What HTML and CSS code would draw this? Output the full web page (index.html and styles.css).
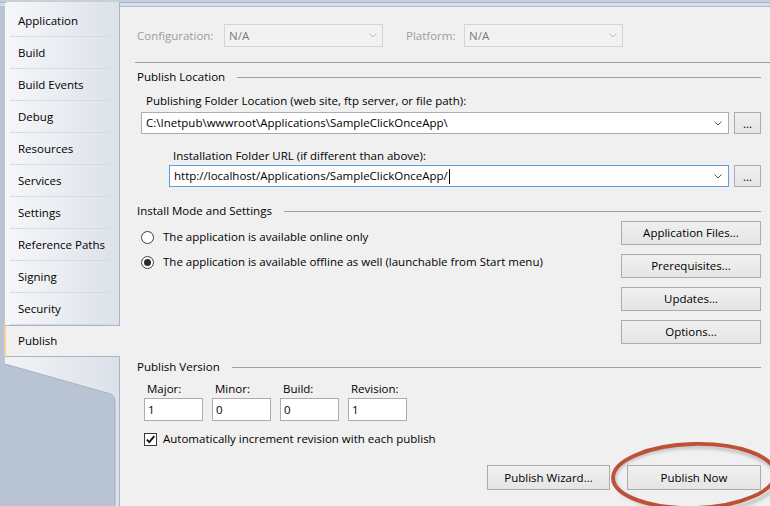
FILE: index.html
```html
<!DOCTYPE html>
<html>
<head>
<meta charset="utf-8">
<link rel="stylesheet" href="styles.css">
</head>
<body>
<div class="frame">
  <nav class="sidebar">
    <div class="tabs">
      <div class="tab">Application</div>
      <div class="tab">Build</div>
      <div class="tab">Build Events</div>
      <div class="tab">Debug</div>
      <div class="tab">Resources</div>
      <div class="tab">Services</div>
      <div class="tab">Settings</div>
      <div class="tab">Reference Paths</div>
      <div class="tab">Signing</div>
      <div class="tab">Security</div>
      <div class="tab selected">Publish</div>
    </div>
    <div class="sidebar-rest">
      <svg class="rest-shape" width="114" height="149" viewBox="0 0 114 149">
        <defs>
          <linearGradient id="sg" x1="0" x2="1" y1="0" y2="0">
            <stop offset="0" stop-color="#f1f3f6"/>
            <stop offset="1" stop-color="#dce1e9"/>
          </linearGradient>
        </defs>
        <path d="M0 0 H114 V149 H110 V44 Q110 38 104 36.5 L0 7 Z" fill="url(#sg)" stroke="none"/>
        <path d="M0 7 L104 36.5 Q110 38 110 44 V149" fill="none" stroke="#a7b3c4" stroke-width="1"/>
      </svg>
    </div>
  </nav>

  <main class="panel">
    <div class="config-row">
      <span class="dis-label cfg">Configuration:</span>
      <div class="select">
        <span>N/A</span>
        <svg class="chev" width="8" height="5" viewBox="0 0 8 5"><path d="M0.5 0.5 L4 4 L7.5 0.5" fill="none" stroke="#b8b8b8" stroke-width="1"/></svg>
      </div>
      <span class="dis-label plat">Platform:</span>
      <div class="select">
        <span>N/A</span>
        <svg class="chev" width="8" height="5" viewBox="0 0 8 5"><path d="M0.5 0.5 L4 4 L7.5 0.5" fill="none" stroke="#b8b8b8" stroke-width="1"/></svg>
      </div>
    </div>

    <div class="rule"></div>

    <div class="group-head"><span>Publish Location</span><i class="line"></i></div>

    <div class="field-label pub">Publishing Folder Location (web site, ftp server, or file path):</div>
    <div class="combo-row r1">
      <div class="combo">
        <span class="ctext">C:\Inetpub\wwwroot\Applications\SampleClickOnceApp\</span>
        <svg class="chev" width="8" height="5" viewBox="0 0 8 5"><path d="M0.5 0.5 L4 4 L7.5 0.5" fill="none" stroke="#555" stroke-width="1"/></svg>
      </div>
      <button class="btn dots">...</button>
    </div>

    <div class="field-label inst">Installation Folder URL (if different than above):</div>
    <div class="combo-row r2">
      <div class="combo focus">
        <span class="ctext">http://localhost/Applications/SampleClickOnceApp/<span class="caret"></span></span>
        <svg class="chev" width="8" height="5" viewBox="0 0 8 5"><path d="M0.5 0.5 L4 4 L7.5 0.5" fill="none" stroke="#555" stroke-width="1"/></svg>
      </div>
      <button class="btn dots">...</button>
    </div>

    <div class="group-head g2"><span>Install Mode and Settings</span><i class="line"></i></div>

    <div class="install">
      <div class="radios">
        <div class="radio-row"><span class="radio"></span><span>The application is available online only</span></div>
        <div class="radio-row"><span class="radio"><span class="dot"></span></span><span>The application is available offline as well (launchable from Start menu)</span></div>
      </div>
      <div class="side-buttons">
        <button class="btn side">Application Files...</button>
        <button class="btn side">Prerequisites...</button>
        <button class="btn side">Updates...</button>
        <button class="btn side">Options...</button>
      </div>
    </div>

    <div class="group-head g3"><span>Publish Version</span><i class="line"></i></div>

    <div class="version">
      <div class="vfield"><span class="vlabel">Major:</span><div class="tbox">1</div></div>
      <div class="vfield"><span class="vlabel">Minor:</span><div class="tbox">0</div></div>
      <div class="vfield"><span class="vlabel">Build:</span><div class="tbox">0</div></div>
      <div class="vfield"><span class="vlabel">Revision:</span><div class="tbox">1</div></div>
    </div>

    <div class="check-row">
      <span class="check"><svg width="11" height="11" viewBox="0 0 11 11"><path d="M1.8 5.6 L4.3 8.2 L9.3 2.2" fill="none" stroke="#111" stroke-width="1.9"/></svg></span>
      <span>Automatically increment revision with each publish</span>
    </div>

    <div class="bottom-buttons">
      <button class="btn wizard">Publish Wizard...</button>
      <button class="btn now">Publish Now</button>
    </div>
  </main>
</div>

<svg class="highlight" width="190" height="90" viewBox="0 0 190 90">
  <defs>
    <filter id="blur" x="-20%" y="-20%" width="140%" height="140%"><feGaussianBlur stdDeviation="1.6"/></filter>
  </defs>
  <ellipse cx="96" cy="49" rx="81" ry="32" fill="none" stroke="#8a8a8a" stroke-opacity="0.45" stroke-width="3.5" filter="url(#blur)"/>
  <ellipse cx="94" cy="46" rx="81" ry="32" fill="none" stroke="#bf5038" stroke-width="3.8" transform="rotate(-1.5 94 46)"/>
</svg>
</body>
</html>
```

FILE: styles.css
```css
html, body {
  margin: 0;
  padding: 0;
}

body {
  width: 770px;
  height: 506px;
  overflow: hidden;
  position: relative;
  font-family: "Open Sans", "Noto Sans", sans-serif;
  font-size: 11.5px;
  line-height: 16px;
  color: #000;
  background: #b8c4d4;
}

.frame {
  display: flex;
  height: 506px;
  background: linear-gradient(to bottom,
    #c6cfdc 0, #c6cfdc 2px,
    #a9b5c6 2px, #a9b5c6 3px,
    #d6dde7 3px, #d6dde7 6px,
    #b8c4d4 6px);
}

/* ---------- sidebar ---------- */
.sidebar {
  width: 115px;
  margin-left: 5px;
  margin-right: -1px;
  margin-top: 2px;
  position: relative;
  z-index: 1;
  display: flex;
  flex-direction: column;
}

.tabs {
  padding-top: 3px;
  background: linear-gradient(to right, #f6f7f9, #dce1e9);
  border-right: 1px solid #a9b5c5;
  border-top-left-radius: 3px;
}

.tab {
  height: 32px;
  line-height: 32px;
  padding-left: 13px;
  background: linear-gradient(#d5dae3, #d5dae3) no-repeat 5px 100% / 100px 1px;
}

.tab.selected {
  box-sizing: border-box;
  margin-left: -1px;
  margin-right: -1px;
  border-top: 1px solid #a9b5c5;
  border-bottom: 1px solid #a9b5c5;
  border-left: 2px solid #f4d28f;
  padding-left: 12px;
  line-height: 30px;
  background: #f0f0f0;
}

.sidebar-rest {
  flex: 1;
  border-right: 1px solid #a9b5c5;
  background: #b8c4d4;
  overflow: hidden;
}

.rest-shape {
  display: block;
}

/* ---------- panel ---------- */
.panel {
  flex: 1;
  min-width: 0;
  margin-top: 6px;
  border-top: 1px solid #b0bccc;
  border-left: 1px solid #a9b5c5;
  background: #f0f0f0;
  display: flex;
  flex-direction: column;
}

.config-row {
  display: flex;
  align-items: center;
  margin-top: 17px;
  padding-left: 17px;
  height: 23px;
}

.dis-label {
  color: #9d9d9d;
}

.dis-label.cfg {
  width: 87px;
}

.dis-label.plat {
  width: 58px;
  margin-left: 23px;
}

.select {
  box-sizing: border-box;
  width: 159px;
  height: 23px;
  border: 1px solid #d4d4d4;
  background: #f2f2f2;
  color: #7a7a7a;
  display: flex;
  align-items: center;
  justify-content: space-between;
  padding: 0 5px 0 4px;
}

.chev {
  display: block;
  flex: none;
}

.rule {
  margin-top: 15px;
  margin-left: 15px;
  height: 1px;
  background: #a0a0a0;
}

.group-head {
  display: flex;
  align-items: center;
  height: 16px;
  margin-top: 6px;
  padding-left: 17px;
  margin-right: 9px;
}

.group-head .line {
  flex: 1;
  height: 1px;
  background: #a0a0a0;
  margin-left: 12px;
}

.group-head.g2 {
  margin-top: 16px;
}

.group-head.g3 {
  margin-top: 15px;
}

.field-label {
  height: 16px;
}

.field-label.pub {
  margin-top: 8px;
  padding-left: 26px;
}

.field-label.inst {
  margin-top: 14px;
  padding-left: 53px;
}

.combo-row {
  display: flex;
  gap: 5px;
  height: 22px;
  margin-right: 9px;
}

.combo-row.r1 {
  margin-top: 3px;
  margin-left: 21px;
}

.combo-row.r2 {
  margin-top: 1px;
  margin-left: 49px;
}

.combo {
  flex: 1;
  box-sizing: border-box;
  height: 22px;
  border: 1px solid #abadb3;
  background: #fff;
  display: flex;
  align-items: center;
  justify-content: space-between;
  padding: 0 6px 0 4px;
}

.combo.focus {
  border-color: #5b9fe3;
}

.ctext {
  white-space: nowrap;
  display: flex;
  align-items: center;
}

.caret {
  display: inline-block;
  width: 1px;
  height: 15px;
  background: #000;
  margin-left: 1px;
}

.btn {
  box-sizing: border-box;
  border: 1px solid #acacac;
  background: linear-gradient(#f0f0f0, #e5e5e5);
  font-family: inherit;
  font-size: 11.5px;
  line-height: 16px;
  color: #000;
  padding: 0;
  margin: 0;
  border-radius: 0;
}

.btn.dots {
  width: 27px;
  height: 22px;
  padding-top: 2px;
  flex: none;
}

/* install mode */
.install {
  display: flex;
  margin-top: 2px;
  margin-right: 9px;
}

.radios {
  flex: 1;
  display: flex;
  flex-direction: column;
  gap: 9px;
  padding-top: 8px;
  padding-left: 21px;
}

.radio-row {
  display: flex;
  align-items: center;
  height: 16px;
  gap: 9px;
}

.radio {
  box-sizing: border-box;
  width: 13px;
  height: 13px;
  border: 1px solid #3c3c3c;
  border-radius: 50%;
  background: #fff;
  display: flex;
  align-items: center;
  justify-content: center;
  flex: none;
}

.dot {
  width: 7px;
  height: 7px;
  border-radius: 50%;
  background: #2a2a2a;
}

.side-buttons {
  width: 140px;
  display: flex;
  flex-direction: column;
  gap: 9px;
}

.btn.side {
  height: 24px;
}

/* version */
.version {
  display: flex;
  gap: 9px;
  margin-top: 6px;
  margin-left: 24px;
}

.vfield {
  display: flex;
  flex-direction: column;
  width: 59px;
}

.vlabel {
  height: 16px;
  padding-left: 3px;
}

.tbox {
  box-sizing: border-box;
  margin-top: 1px;
  height: 23px;
  border: 1px solid #abadb3;
  background: #fff;
  padding-left: 3px;
  display: flex;
  align-items: center;
}

.check-row {
  display: flex;
  align-items: center;
  gap: 6px;
  height: 16px;
  margin-top: 10px;
  margin-left: 24px;
}

.check {
  box-sizing: border-box;
  width: 13px;
  height: 13px;
  border: 1px solid #3c3c3c;
  background: #fff;
  display: flex;
  align-items: center;
  justify-content: center;
  flex: none;
}

.check svg {
  display: block;
}

.bottom-buttons {
  display: flex;
  justify-content: flex-end;
  gap: 17px;
  margin-top: 18px;
  margin-right: 9px;
}

.btn.wizard {
  width: 123px;
  height: 25px;
}

.btn.now {
  width: 134px;
  height: 25px;
}

/* annotation ellipse drawn over the page */
.highlight {
  position: absolute;
  left: 600px;
  top: 430px;
  overflow: visible;
}
```
